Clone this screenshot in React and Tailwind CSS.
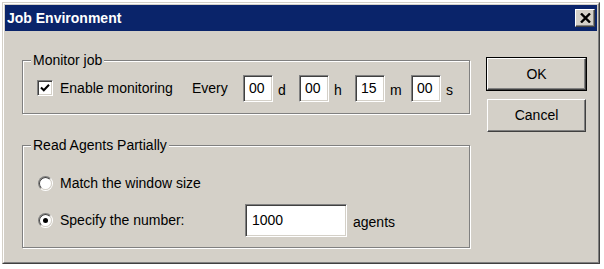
import React from 'react';

// classic 3D edges
const sunken =
  'bg-white border border-t-[#808080] border-l-[#808080] border-r-white border-b-white shadow-[inset_1px_1px_0_#404040,inset_-1px_-1px_0_#d4d0c8]';
const raised =
  'bg-[#d4d0c8] border border-t-white border-l-white border-r-[#404040] border-b-[#404040] shadow-[inset_-1px_-1px_0_#808080,inset_1px_1px_0_#d4d0c8]';

function GroupBox({ title, className, children }) {
  return (
    <div className={`relative border border-[#808080] shadow-[1px_1px_0_#fff,inset_1px_1px_0_#fff] ${className}`}>
      <span className="absolute -top-[9px] left-[8px] px-[2px] bg-[#d4d0c8] leading-[16px]">{title}</span>
      {children}
    </div>
  );
}

function Checkbox({ checked }) {
  return (
    <span className={`w-[16px] h-[16px] flex items-center justify-center ${sunken}`}>
      {checked && (
        <svg width="10" height="10" viewBox="0 0 10 10">
          <path d="M1 4.5 L3.8 7.3 L9 1.8" fill="none" stroke="#000" strokeWidth="2" />
        </svg>
      )}
    </span>
  );
}

function Radio({ checked }) {
  return (
    <span className="w-[15px] h-[15px] rounded-full border border-t-[#808080] border-l-[#808080] border-r-white border-b-white flex">
      <span className="flex-1 rounded-full bg-white border border-t-[#404040] border-l-[#404040] border-r-[#d4d0c8] border-b-[#d4d0c8] flex items-center justify-center">
        {checked && <span className="w-[5px] h-[5px] rounded-full bg-black" />}
      </span>
    </span>
  );
}

function TimeField({ value, unit }) {
  return (
    <div className="flex items-center">
      <div className={`w-[30px] h-[27px] flex items-center pl-[5px] ${sunken}`}>{value}</div>
      <span className="w-[26px] pl-[5px] pt-[4px]">{unit}</span>
    </div>
  );
}

export default function App() {
  const fields = [
    { value: '00', unit: 'd' },
    { value: '00', unit: 'h' },
    { value: '15', unit: 'm' },
    { value: '00', unit: 's' },
  ];

  return (
    <div className="w-[604px] h-[269px] bg-white pl-[2px] pt-[2px] text-[14px] text-black font-['Liberation_Sans',Arial,sans-serif]">
      <div className="w-[598px] h-[262px] border border-t-[#d4d0c8] border-l-[#d4d0c8] border-r-[#404040] border-b-[#404040]">
        <div className="h-full bg-[#d4d0c8] border border-t-white border-l-white border-r-[#808080] border-b-[#808080] p-px flex flex-col">
          {/* title bar */}
          <div className="h-[26px] bg-[#0a246a] flex items-center justify-between pl-[2px] pr-[2px]">
            <span className="text-white font-bold text-[14px] leading-none">Job Environment</span>
            <button className={`w-[20px] h-[18px] flex items-center justify-center ${raised}`}>
              <svg width="11" height="10" viewBox="0 0 11 10">
                <path d="M1 0.5 L10 9.5 M10 0.5 L1 9.5" stroke="#000" strokeWidth="2.4" />
              </svg>
            </button>
          </div>

          <div className="flex items-start pl-[17px]">
            <div className="w-[448px] mt-[29px] flex flex-col gap-[31px]">
              <GroupBox title="Monitor job" className="h-[54px] flex items-center pl-[14px] pt-[2px]">
                <Checkbox checked />
                <span className="w-[139px] pl-[7px]">Enable monitoring</span>
                <span className="w-[51px]">Every</span>
                {fields.map((f) => (
                  <TimeField key={f.unit} value={f.value} unit={f.unit} />
                ))}
              </GroupBox>

              <GroupBox title="Read Agents Partially" className="h-[103px] flex flex-col pl-[15px] pt-[29px]">
                <div className="flex items-center h-[16px]">
                  <Radio />
                  <span className="pl-[7px]">Match the window size</span>
                </div>
                <div className="flex items-start mt-[13px]">
                  <div className="flex items-center w-[207px] mt-[6px]">
                    <Radio checked />
                    <span className="pl-[7px]">Specify the number:</span>
                  </div>
                  <div className={`w-[102px] h-[33px] flex items-center pl-[6px] ${sunken}`}>1000</div>
                  <span className="pl-[6px] mt-[8px]">agents</span>
                </div>
              </GroupBox>
            </div>

            <div className="ml-[16px] mt-[26px] flex flex-col">
              <div className="w-[101px] h-[34px] border border-black flex">
                <button className={`flex-1 ${raised}`}>OK</button>
              </div>
              <button className={`w-[99px] h-[33px] ml-[1px] mt-[8px] ${raised}`}>Cancel</button>
            </div>
          </div>
        </div>
      </div>
    </div>
  );
}
